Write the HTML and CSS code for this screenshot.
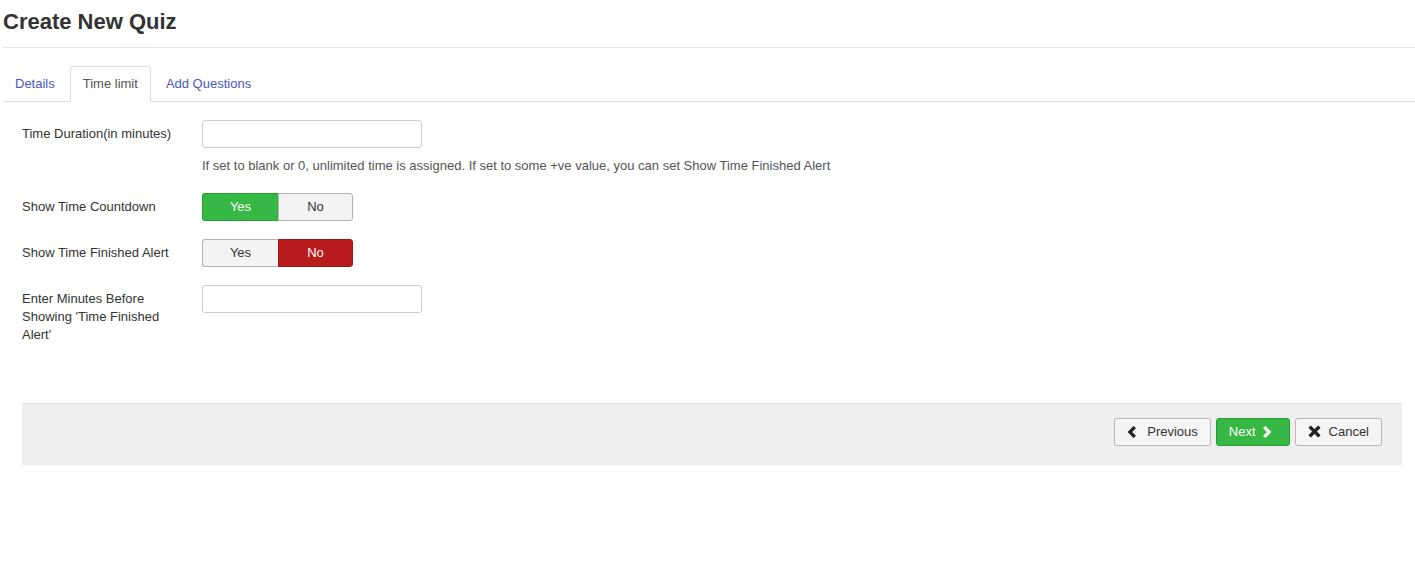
FILE: index.html
```html
<!DOCTYPE html>
<html lang="en">
<head>
  <meta charset="UTF-8" />
  <title>Create New Quiz</title>
  <link rel="stylesheet" href="styles.css">
</head>
<body>
  <div class="page-header">
    <h1 class="page-title">Create New Quiz</h1>
  </div>

  <ul class="tabs">
    <li><a href="#" class="tab-link">Details</a></li>
    <li><a href="#" class="tab-link active">Time limit</a></li>
    <li><a href="#" class="tab-link">Add Questions</a></li>
  </ul>

  <form class="quiz-form">
    <div class="control-group">
      <label class="control-label">Time Duration(in minutes)</label>
      <div class="controls">
        <input type="text" class="text-input" />
        <p class="help-text">If set to blank or 0, unlimited time is assigned. If set to some +ve value, you can set Show Time Finished Alert</p>
      </div>
    </div>

    <div class="control-group">
      <label class="control-label">Show Time Countdown</label>
      <div class="controls">
        <div class="btn-group">
          <span class="toggle yes-on">Yes</span>
          <span class="toggle">No</span>
        </div>
      </div>
    </div>

    <div class="control-group">
      <label class="control-label">Show Time Finished Alert</label>
      <div class="controls">
        <div class="btn-group">
          <span class="toggle">Yes</span>
          <span class="toggle no-on">No</span>
        </div>
      </div>
    </div>

    <div class="control-group">
      <label class="control-label">Enter Minutes Before Showing 'Time Finished Alert'</label>
      <div class="controls">
        <input type="text" class="text-input" />
      </div>
    </div>

    <div class="form-actions">
      <button type="button" class="btn btn-prev">
        <svg class="icon" viewBox="0 0 10 12" width="10" height="12"><path d="M7.8 1 L2.8 6 L7.8 11" fill="none" stroke="#222" stroke-width="3.2" /></svg>
        Previous
      </button>
      <button type="button" class="btn btn-next">
        Next
        <svg class="icon" viewBox="0 0 10 12" width="10" height="12"><path d="M2.2 1 L7.2 6 L2.2 11" fill="none" stroke="#fff" stroke-width="3.2" /></svg>
      </button>
      <button type="button" class="btn btn-cancel">
        <svg class="icon" viewBox="0 0 12 12" width="13" height="13"><path d="M1.5 1.5 L10.5 10.5 M10.5 1.5 L1.5 10.5" fill="none" stroke="#222" stroke-width="3.2" /></svg>
        Cancel
      </button>
    </div>
  </form>
</body>
</html>
```

FILE: styles.css
```css
body {
  margin: 0;
  padding: 0 0 0 3px;
  background-color: #fff;
  color: #333;
  font-family: "Liberation Sans", Arial, sans-serif;
  font-size: 13px;
  line-height: 18px;
}

.page-header {
  border-bottom: 1px solid #e3e3e3;
  padding: 9px 0 12px;
}

.page-title {
  margin: 0;
  font-size: 22px;
  line-height: 26px;
  font-weight: bold;
  color: #333;
}

.tabs {
  display: flex;
  list-style: none;
  margin: 18px 0 0;
  padding: 0;
  border-bottom: 1px solid #ddd;
}

.tabs li:first-child {
  margin-left: -1px;
}

.tab-link {
  display: block;
  margin-bottom: -1px;
  margin-right: 2px;
  padding: 8px 12px;
  line-height: 18px;
  color: #4b57c2;
  text-decoration: none;
  border: 1px solid transparent;
  border-radius: 4px 4px 0 0;
}

.tab-link.active {
  color: #555;
  background-color: #fff;
  border-color: #ddd #ddd transparent;
}

.quiz-form {
  padding: 18px 13px 0 19px;
}

.control-group {
  display: flex;
  margin-bottom: 18px;
}

.control-label {
  width: 160px;
  padding-top: 5px;
  padding-right: 20px;
}

.controls {
  flex: 1;
}

.text-input {
  display: block;
  box-sizing: border-box;
  width: 220px;
  height: 28px;
  margin: 0;
  padding: 4px 6px;
  border: 1px solid #ccc;
  border-radius: 3px;
  font-family: inherit;
  font-size: 13px;
}

.help-text {
  margin: 9px 0 0;
  color: #555;
}

.btn-group {
  display: flex;
}

.toggle {
  box-sizing: border-box;
  width: 75px;
  height: 28px;
  line-height: 26px;
  text-align: center;
  background-color: #f3f3f3;
  border: 1px solid #b3b3b3;
  color: #333;
}

.toggle:first-child {
  width: 76px;
  border-radius: 3px 0 0 3px;
  border-right: none;
}

.toggle:last-child {
  border-radius: 0 3px 3px 0;
}

.toggle.yes-on {
  background-color: #36b844;
  border-color: #2a9c36;
  color: #fff;
}

.toggle.no-on {
  background-color: #b81c1c;
  border-color: #9e1717;
  color: #fff;
}

.form-actions {
  display: flex;
  justify-content: flex-end;
  gap: 5px;
  margin-top: 59px;
  padding: 14px 20px 19px;
  background-color: #eee;
  border-top: 1px solid #e2e2e2;
}

.btn {
  display: inline-flex;
  align-items: center;
  box-sizing: border-box;
  height: 28px;
  padding: 0 12px 1px;
  font-family: inherit;
  font-size: 13px;
  color: #333;
  background-color: #f5f5f5;
  border: 1px solid #b8b8b8;
  border-radius: 3px;
}

.btn-prev {
  gap: 10px;
}

.btn-next {
  gap: 6px;
  padding-right: 17px;
  color: #fff;
  background-color: #36b844;
  border-color: #2a9c36;
}

.btn-cancel {
  gap: 8px;
}

.icon {
  display: block;
}
```
